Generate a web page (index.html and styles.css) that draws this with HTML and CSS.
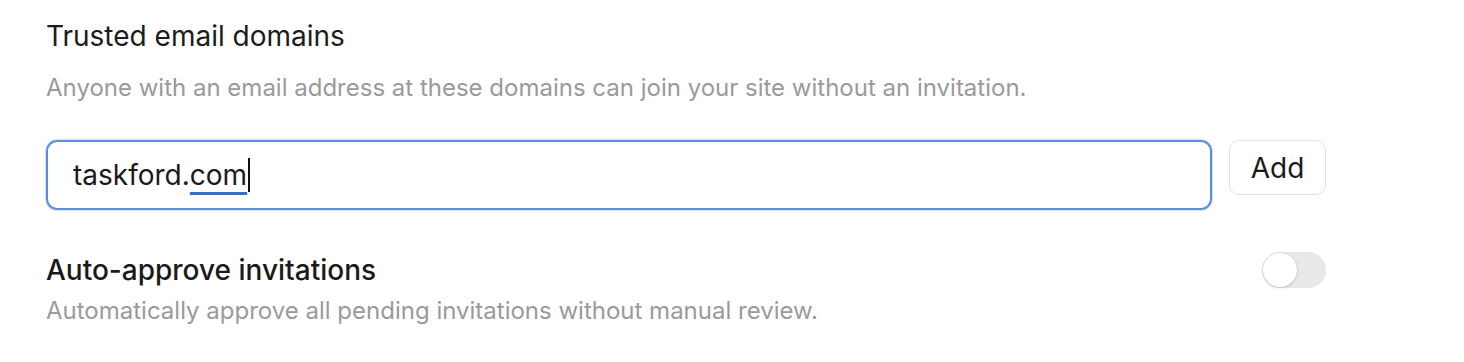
FILE: index.html
```html
<!DOCTYPE html>
<html>
<head>
<meta charset="utf-8">
<link rel="stylesheet" href="styles.css">
</head>
<body>
<div class="page">
  <section class="section">
    <h2 class="title">Trusted email domains</h2>
    <p class="desc">Anyone with an email address at these domains can join your site without an invitation.</p>
    <div class="row">
      <div class="input"><span>taskford.</span><span class="compose">com</span><span class="caret"></span></div>
      <button class="btn">Add</button>
    </div>
  </section>
  <section class="setting">
    <div class="setting-text">
      <h3 class="setting-title">Auto-approve invitations</h3>
      <p class="desc2">Automatically approve all pending invitations without manual review.</p>
    </div>
    <div class="toggle"><div class="knob"></div></div>
  </section>
</div>
</body>
</html>
```
FILE: styles.css
```css
html, body {
  margin: 0;
  padding: 0;
  background: #ffffff;
}
body {
  font-family: Inter, "Noto Sans", sans-serif;
  color: #1a1a1a;
}
.page {
  width: 1280px;
  padding: 18px 0 0 46px;
}
.title {
  margin: 0;
  font-size: 28px;
  font-weight: 400;
  line-height: 36px;
  color: #1c1c1c;
}
.desc {
  margin: 18px 0 0;
  font-size: 24px;
  line-height: 32px;
  color: #9a9a9a;
}
.row {
  display: flex;
  align-items: flex-start;
  gap: 17px;
  margin-top: 36px;
}
.input {
  flex: 1;
  border: 2px solid #5a8fe0;
  border-radius: 11px;
  box-shadow: 0 0 0 1px rgba(90,143,224,0.25);
  display: flex;
  align-items: center;
  padding-left: 25px;
  font-size: 28px;
  color: #1a1a1a;
  box-sizing: border-box;
  height: 70px;
}
.compose {
  text-decoration: underline;
  text-decoration-color: #2f6fd8;
  text-decoration-thickness: 3px;
  text-underline-offset: 7px;
}
.caret {
  display: inline-block;
  width: 2px;
  height: 34px;
  background: #111;
  margin-left: 1px;
}
.btn {
  width: 97px;
  height: 55px;
  border: 1.5px solid #e2e2e4;
  border-radius: 10px;
  background: #fff;
  font-family: inherit;
  font-size: 28px;
  color: #1a1a1a;
  padding: 0;
}
.setting {
  display: flex;
  justify-content: space-between;
  align-items: flex-start;
  margin-top: 42px;
}
.setting-title {
  margin: 0;
  font-size: 28px;
  font-weight: 500;
  line-height: 36px;
  color: #1a1a1a;
}
.desc2 {
  margin: 7px 0 0;
  font-size: 24px;
  line-height: 32px;
  color: #9a9a9a;
}
.toggle {
  width: 64px;
  height: 36px;
  border-radius: 18px;
  background: #e8e8eb;
  position: relative;
}
.knob {
  position: absolute;
  left: 1px;
  top: 1px;
  width: 34px;
  height: 34px;
  border-radius: 50%;
  background: #fff;
  box-shadow: 0 1px 3px rgba(0,0,0,0.15), 0 0 0 0.5px rgba(0,0,0,0.06);
}
```
